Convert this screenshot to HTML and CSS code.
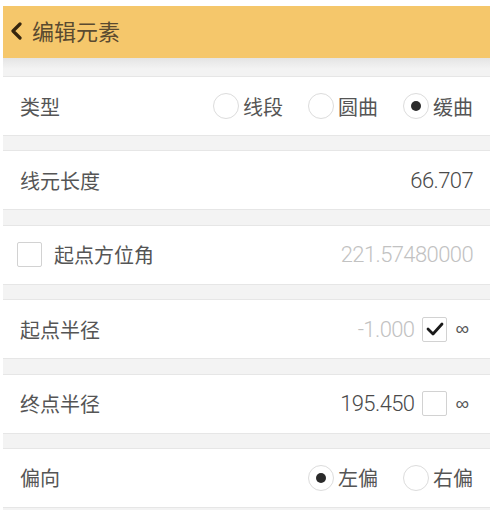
FILE: index.html
```html
<!DOCTYPE html>
<html>
<head>
    <title>编辑元素</title>
    <link rel="stylesheet" href="styles.css">
</head>
<body>
    <div class="page">
        <div class="header">
            <svg class="back" width="14" height="18" viewBox="0 0 14 18">
                <polyline points="10,2 3,9 10,16" fill="none" stroke="#35250e" stroke-width="3.2" stroke-linecap="round" stroke-linejoin="round"/>
            </svg>
            <span class="title">编辑元素</span>
        </div>
        <div class="shadow-gap"></div>

        <div class="row">
            <span class="label">类型</span>
            <div class="options">
                <label class="option"><span class="radio"></span>线段</label>
                <label class="option"><span class="radio"></span>圆曲</label>
                <label class="option"><span class="radio checked"></span>缓曲</label>
            </div>
        </div>
        <div class="gap"></div>

        <div class="row">
            <span class="label">线元长度</span>
            <span class="value">66.707</span>
        </div>
        <div class="gap"></div>

        <div class="row with-check">
            <div class="left">
                <span class="checkbox"></span>
                <span class="label">起点方位角</span>
            </div>
            <span class="value muted">221.57480000</span>
        </div>
        <div class="gap"></div>

        <div class="row">
            <span class="label">起点半径</span>
            <div class="right">
                <span class="value muted">-1.000</span>
                <span class="checkbox">
                    <svg width="18" height="14" viewBox="0 0 18 14">
                        <polyline points="2,7 7,12 16,2" fill="none" stroke="#1a1a1a" stroke-width="2.8" stroke-linecap="round" stroke-linejoin="round"/>
                    </svg>
                </span>
                <span class="inf">∞</span>
            </div>
        </div>
        <div class="gap"></div>

        <div class="row">
            <span class="label">终点半径</span>
            <div class="right">
                <span class="value">195.450</span>
                <span class="checkbox"></span>
                <span class="inf">∞</span>
            </div>
        </div>
        <div class="gap"></div>

        <div class="row">
            <span class="label">偏向</span>
            <div class="options">
                <label class="option"><span class="radio checked"></span>左偏</label>
                <label class="option"><span class="radio"></span>右偏</label>
            </div>
        </div>
        <div class="gap"></div>
    </div>
</body>
</html>
```

FILE: styles.css
```css
body {
    margin: 0;
    padding: 6px 12px 0 3px;
    background-color: white;
    font-family: Roboto, "Liberation Sans", "Noto Sans CJK SC", sans-serif;
    color: #555;
}
.page {
    width: 487px;
}
.header {
    height: 52px;
    background-color: #f5c76b;
    display: flex;
    align-items: center;
    padding-left: 7px;
    gap: 8px;
}
.back {
    margin-top: -2px;
}
.title {
    font-family: "Noto Sans CJK SC", sans-serif;
    font-size: 22px;
    color: #5a4a30;
    margin-top: -4px;
}
.shadow-gap {
    height: 18px;
    background: linear-gradient(#e4e4e4, #f3f3f3 60%);
}
.gap {
    height: 14.4px;
    background-color: #f3f3f3;
}
.row {
    height: 58px;
    border-top: 1px solid #e6e6e6;
    border-bottom: 1px solid #e6e6e6;
    background-color: white;
    display: flex;
    align-items: center;
    justify-content: space-between;
    padding: 0 17px;
}
.row.with-check {
    padding-left: 14px;
}
.label {
    font-family: "Noto Sans CJK SC", sans-serif;
    font-size: 20px;
    color: #555;
}
.value {
    font-size: 22px;
    font-weight: 300;
    color: #4a4a4a;
    letter-spacing: -0.6px;
}
.muted {
    color: #c2c2c2;
}
.left {
    display: flex;
    align-items: center;
    gap: 12px;
}
.right {
    display: flex;
    align-items: center;
    gap: 8px;
}
.options {
    display: flex;
    align-items: center;
    gap: 25px;
}
.option {
    display: flex;
    align-items: center;
    gap: 4px;
    font-family: "Noto Sans CJK SC", sans-serif;
    font-size: 20px;
    color: #555;
}
.radio {
    width: 24px;
    height: 24px;
    border: 1.5px solid #dcdcdc;
    border-radius: 50%;
    display: flex;
    align-items: center;
    justify-content: center;
}
.radio.checked::after {
    content: "";
    width: 10px;
    height: 10px;
    border-radius: 50%;
    background-color: #2a2a2a;
}
.checkbox {
    width: 23px;
    height: 23px;
    border: 1px solid #d2d2d2;
    border-radius: 2px;
    display: flex;
    align-items: center;
    justify-content: center;
}
.inf {
    font-family: "Liberation Sans", sans-serif;
    font-size: 19px;
    color: #555;
    margin-right: 4px;
}
```
